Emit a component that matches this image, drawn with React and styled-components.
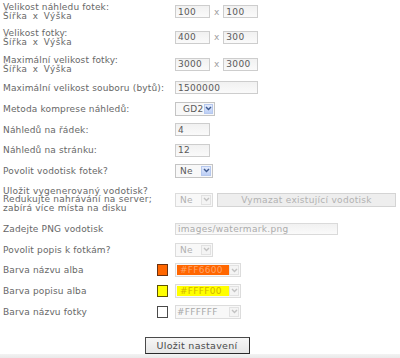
import styled, { createGlobalStyle } from "styled-components";

const GlobalStyle = createGlobalStyle`
  html, body {
    margin: 0;
    padding: 0;
    background: #fff;
  }
  body {
    font-family: "DejaVu Sans", Verdana, sans-serif;
    color: #676767;
  }
`;

const Page = styled.div`
  width: 400px;
  height: 358px;
  display: flex;
  flex-direction: column;
  overflow: hidden;
`;

const Form = styled.div`
  display: flex;
  flex-direction: column;
  padding-left: 3px;
`;

const Row = styled.div`
  display: grid;
  grid-template-columns: 172px 1fr;
  align-items: center;
  height: ${(p) => p.$h}px;
`;

const Label = styled.div`
  display: flex;
  align-items: center;
  justify-content: space-between;
  padding-right: 7px;
  font-size: 9px;
  letter-spacing: ${(p) => (p.$tight ? 0.25 : 0.15)}px;
  line-height: ${(p) => (p.$tight ? 8.6 : 10)}px;
  white-space: nowrap;
`;

const Sub = styled.span`
  display: block;
  font-size: 8.8px;
  line-height: 9px;
  letter-spacing: 0.5px;
  word-spacing: 2px;
`;

const Controls = styled.div`
  display: flex;
  align-items: center;
  gap: ${(p) => p.$gap || 4}px;
`;

const Input = styled.input`
  box-sizing: border-box;
  width: ${(p) => p.$w}px;
  height: ${(p) => p.$hh || 13}px;
  margin: 0;
  padding: 0 0 0 2px;
  border: 1px solid ${(p) => (p.disabled ? "#dadada" : "#cdcdcd")};
  background: linear-gradient(#f1f1f1, #fafafa);
  font-family: "DejaVu Sans", Verdana, sans-serif;
  font-size: 9px;
  letter-spacing: 0.3px;
  color: ${(p) => (p.disabled ? "#ababab" : "#5a5a5a")};
  outline: none;
`;

const Times = styled.span`
  font-size: 9px;
  color: #a0a0a0;
`;

const SelectBox = styled.div`
  box-sizing: border-box;
  width: ${(p) => p.$w}px;
  height: 14px;
  display: flex;
  align-items: center;
  justify-content: space-between;
  padding: 0 1px 0 ${(p) => (p.$pad ? p.$pad : 4)}px;
  border: 1px solid ${(p) => (p.$off ? "#dcdcdc" : "#c4c4c4")};
  background: #f8f8f8;
  font-size: 9px;
  letter-spacing: 0.3px;
  color: ${(p) => (p.$off ? "#b0b0b0" : "#5a5a5a")};
`;

const Value = styled.span`
  display: flex;
  align-items: center;
  height: 10px;
  width: ${(p) => (p.$w ? p.$w + "px" : "auto")};
  padding-left: ${(p) => (p.$bg ? 3 : 0)}px;
  background: ${(p) => p.$bg || "transparent"};
  color: ${(p) => p.$fg || "inherit"};
  font-size: 9px;
`;

const Arrow = styled.span`
  box-sizing: border-box;
  width: 10px;
  height: 10px;
  display: flex;
  align-items: center;
  justify-content: center;
  border: 1px solid ${(p) => (p.$off ? "#e2e2e2" : "#b6c8ee")};
  background: ${(p) =>
    p.$off ? "#f4f4f4" : "linear-gradient(#e3ebfc, #bccff6)"};
`;

const Chevron = ({ off }) => (
  <svg width="7" height="5" viewBox="0 0 7 5">
    <path
      d="M1 1 L3.5 3.6 L6 1"
      fill="none"
      stroke={off ? "#c2c2c2" : "#3f5a8f"}
      strokeWidth="1.4"
    />
  </svg>
);

const Select = ({ w, value, off, pad, valueBg, valueFg, valueW }) => (
  <SelectBox $w={w} $off={off} $pad={pad}>
    <Value $bg={valueBg} $fg={valueFg} $w={valueW}>
      {value}
    </Value>
    <Arrow $off={off}>
      <Chevron off={off} />
    </Arrow>
  </SelectBox>
);

const Swatch = styled.span`
  box-sizing: border-box;
  width: 11px;
  height: 12px;
  border: 1px solid ${(p) => p.$border};
  background: ${(p) => p.$color};
`;

const WideButton = styled.button`
  box-sizing: border-box;
  width: 179px;
  height: 14px;
  margin: 0;
  padding: 0;
  border: 1px solid #d4d4d4;
  background: #eeeeee;
  font-family: "DejaVu Sans", Verdana, sans-serif;
  font-size: 9px;
  letter-spacing: 0.3px;
  color: #b2b2b2;
`;

const SaveButton = styled.button`
  align-self: center;
  box-sizing: border-box;
  width: 105px;
  height: 17px;
  margin: 15px 0 0 -6px;
  padding: 0;
  border: 1px solid #4a4a4a;
  border-right-color: #2a2a2a;
  border-bottom-color: #2a2a2a;
  background: linear-gradient(#f6f6f6, #e6e6e6);
  font-family: "DejaVu Sans", Verdana, sans-serif;
  font-size: 9.5px;
  letter-spacing: 0.3px;
  color: #4a4a4a;
`;

const Footer = styled.div`
  margin-top: auto;
  height: 4px;
  background: linear-gradient(#f3f3f3, #e9e9e9);
`;

const colors = [
  { label: "Barva názvu alba", value: "#FF6600", bg: "#ff6600", fg: "#ffa468", border: "#6b3210" },
  { label: "Barva popisu alba", value: "#FFFF00", bg: "#ffff00", fg: "#d2b300", border: "#5e5300" },
  { label: "Barva názvu fotky", value: "#FFFFFF", bg: null, fg: "#a8a8a8", border: "#4a4a4a" },
];

export default function App() {
  return (
    <>
      <GlobalStyle />
      <Page>
        <Form>
          <Row $h={23}>
            <Label>
              <span>
                Velikost náhledu fotek:
                <Sub>Šířka x Výška</Sub>
              </span>
            </Label>
            <Controls>
              <Input $w={35} defaultValue="100" />
              <Times>x</Times>
              <Input $w={35} defaultValue="100" />
            </Controls>
          </Row>
          <Row $h={28}>
            <Label>
              <span>
                Velikost fotky:
                <Sub>Šířka x Výška</Sub>
              </span>
            </Label>
            <Controls>
              <Input $w={35} defaultValue="400" />
              <Times>x</Times>
              <Input $w={35} defaultValue="300" />
            </Controls>
          </Row>
          <Row $h={26}>
            <Label>
              <span>
                Maximální velikost fotky:
                <Sub>Šířka x Výška</Sub>
              </span>
            </Label>
            <Controls>
              <Input $w={35} defaultValue="3000" />
              <Times>x</Times>
              <Input $w={35} defaultValue="3000" />
            </Controls>
          </Row>
          <Row $h={21}>
            <Label>Maximální velikost souboru (bytů):</Label>
            <Controls>
              <Input $w={83} defaultValue="1500000" />
            </Controls>
          </Row>
          <Row $h={21}>
            <Label>Metoda komprese náhledů:</Label>
            <Controls>
              <Select w={40} value="GD2" pad={7} />
            </Controls>
          </Row>
          <Row $h={21}>
            <Label>Náhledů na řádek:</Label>
            <Controls>
              <Input $w={35} defaultValue="4" />
            </Controls>
          </Row>
          <Row $h={20}>
            <Label>Náhledů na stránku:</Label>
            <Controls>
              <Input $w={35} defaultValue="12" />
            </Controls>
          </Row>
          <Row $h={21}>
            <Label>Povolit vodotisk fotek?</Label>
            <Controls>
              <Select w={38} value="Ne" />
            </Controls>
          </Row>
          <Row $h={37}>
            <Label $tight>
              <span>
                Uložit vygenerovaný vodotisk?
                <br />
                Redukujte nahrávání na server;
                <br />
                zabírá více místa na disku
              </span>
            </Label>
            <Controls>
              <Select w={38} value="Ne" off />
              <WideButton disabled>Vymazat existující vodotisk</WideButton>
            </Controls>
          </Row>
          <Row $h={21}>
            <Label>Zadejte PNG vodotisk</Label>
            <Controls>
              <Input $w={163} $hh={12} disabled defaultValue="images/watermark.png" />
            </Controls>
          </Row>
          <Row $h={21}>
            <Label>Povolit popis k fotkám?</Label>
            <Controls>
              <Select w={38} value="Ne" off />
            </Controls>
          </Row>
          {colors.map((c, i) => (
            <Row key={c.label} $h={i === 0 ? 20 : 21}>
              <Label>
                <span>{c.label}</span>
                <Swatch $color={c.bg || "#fff"} $border={c.border} />
              </Label>
              <Controls>
                <Select
                  w={66}
                  value={c.value}
                  off
                  pad={1}
                  valueBg={c.bg}
                  valueFg={c.fg}
                  valueW={49}
                />
              </Controls>
            </Row>
          ))}
        </Form>
        <SaveButton>Uložit nastavení</SaveButton>
        <Footer />
      </Page>
    </>
  );
}
